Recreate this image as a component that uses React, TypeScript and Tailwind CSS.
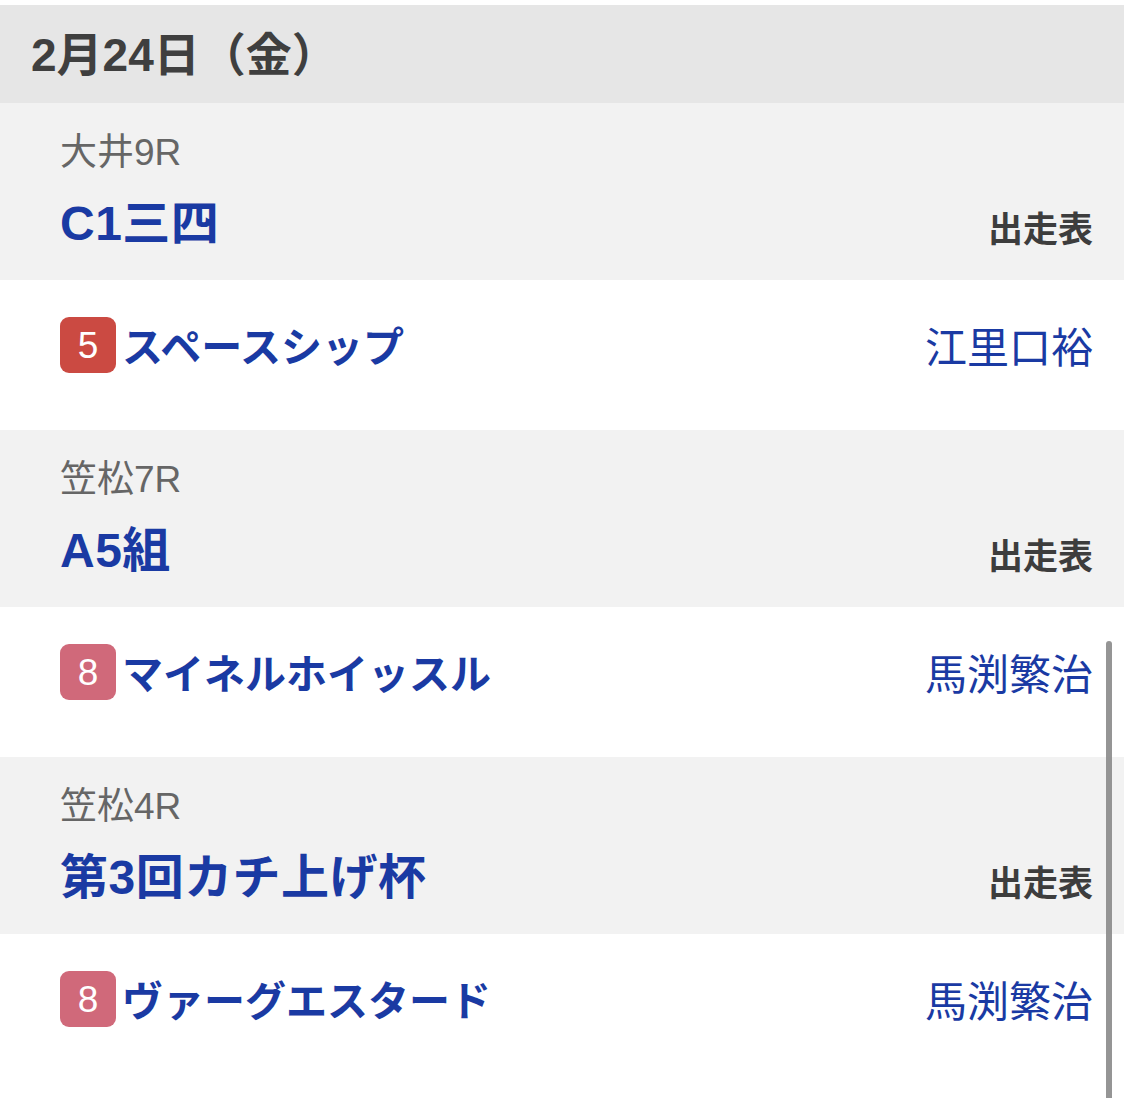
import React from 'react';

type Entry = {
  course: string;
  title: string;
  waku: number;
  horse: string;
  jockey: string;
};

const entries: Entry[] = [
  { course: '大井9R', title: 'C1三四', waku: 5, horse: 'スペースシップ', jockey: '江里口裕' },
  { course: '笠松7R', title: 'A5組', waku: 8, horse: 'マイネルホイッスル', jockey: '馬渕繁治' },
  { course: '笠松4R', title: '第3回カチ上げ杯', waku: 8, horse: 'ヴァーグエスタード', jockey: '馬渕繁治' },
];

const wakuColor: Record<number, string> = {
  5: 'bg-[#cb4a42]',
  8: 'bg-[#d0697a]',
};

const RaceBlock = ({ entry }: { entry: Entry }) => {
  return (
    <div>
      {/* race header */}
      <div className="h-[177px] bg-[#f2f2f2] pl-[60px] pr-[31px] pt-[31px]">
        <div className="text-[37px] leading-[37px] text-[#666666]">{entry.course}</div>
        <div className="mt-[29px] flex items-end justify-between">
          <div className="text-[48px] leading-[48px] font-bold tracking-[0.01em] text-[#1a3aa3]">{entry.title}</div>
          <div className="mb-[1px] text-[35px] leading-[35px] font-bold text-[#3d3d3d]">出走表</div>
        </div>
      </div>

      {/* horse row */}
      <div className="h-[150px] bg-white pl-[60px] pr-[31px] pt-[37px]">
        <div className="flex h-[56px] items-center justify-between">
          <div className="flex items-center gap-[6px]">
            <span
              className={`flex h-[56px] w-[56px] items-center justify-center rounded-[9px] ${wakuColor[entry.waku]} text-[37px] leading-none text-white`}
            >
              {entry.waku}
            </span>
            <span className="mt-[6px] text-[41px] leading-[41px] font-bold text-[#1a3aa3]">{entry.horse}</span>
          </div>
          <span className="mt-[7px] text-[42px] leading-[42px] text-[#1a3aa3]">{entry.jockey}</span>
        </div>
      </div>
    </div>
  );
};

export default function App() {
  return (
    <div className="relative h-[1098px] w-[1124px] overflow-hidden bg-white pt-[5px] font-['Liberation_Sans','Noto_Sans_CJK_JP',sans-serif]">
      <div className="flex h-[98px] items-center bg-[#e6e6e6] pl-[31px]">
        <h2 className="mt-[2px] text-[46px] leading-none font-bold text-[#3f3f3f]">2月24日（金）</h2>
      </div>

      {entries.map((e, i) => (
        <RaceBlock key={i} entry={e} />
      ))}

      {/* scroll indicator */}
      <div className="absolute left-[1106px] top-[641px] h-[470px] w-[6px] rounded-full bg-[#8a8a8a]/90" />
    </div>
  );
}
